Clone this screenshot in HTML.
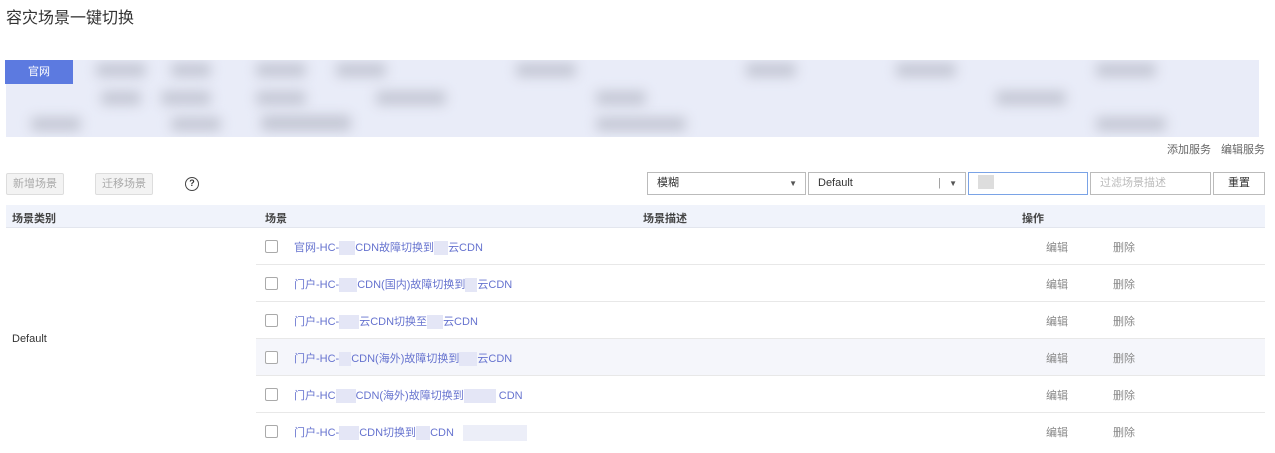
<!DOCTYPE html><html><head><meta charset="utf-8"><style>
*{margin:0;padding:0;box-sizing:border-box}
body{width:1275px;height:453px;background:#fff;font-family:"Liberation Sans","Noto Sans CJK SC",sans-serif;font-size:11px;color:#333;position:relative;overflow:hidden}
.a{position:absolute}
.band{left:6px;top:60px;width:1253px;height:77px;background:#e9ecf8;overflow:hidden}
.blob{position:absolute;background:#c4c7d4;filter:blur(6px);border-radius:4px;height:14px}
.btn{border:1px solid #ddd;background:#f3f3f3;color:#aaa;text-align:center;line-height:20px;height:22px;border-radius:2px}
.sel{border:1px solid #bbb;height:23px;line-height:21px;padding-left:9px;background:#fff}
.row{left:256px;width:1009px;height:37px;border-bottom:1px solid #e8e8e8}
.cb{position:absolute;left:9px;top:12px;width:13px;height:13px;border:1px solid #aaa;border-radius:2px;background:#fff}
.lk{position:absolute;left:38px;top:11px;color:#6673cf}
.op{position:absolute;top:11px;color:#888}
.m{display:inline-block;background:#e4e6f6;height:14px;vertical-align:middle}
</style></head><body>
<div class="a" style="left:6px;top:4px;font-size:16px;color:#333">容灾场景一键切换</div>
<div class="a band">
<div class="blob" style="left:90px;top:3px;width:50px"></div>
<div class="blob" style="left:165px;top:3px;width:40px"></div>
<div class="blob" style="left:250px;top:3px;width:50px"></div>
<div class="blob" style="left:330px;top:3px;width:50px"></div>
<div class="blob" style="left:510px;top:3px;width:60px"></div>
<div class="blob" style="left:740px;top:3px;width:50px"></div>
<div class="blob" style="left:890px;top:3px;width:60px"></div>
<div class="blob" style="left:1090px;top:3px;width:60px"></div>
<div class="blob" style="left:95px;top:31px;width:40px"></div>
<div class="blob" style="left:155px;top:31px;width:50px"></div>
<div class="blob" style="left:250px;top:31px;width:50px"></div>
<div class="blob" style="left:370px;top:31px;width:70px"></div>
<div class="blob" style="left:590px;top:31px;width:50px"></div>
<div class="blob" style="left:990px;top:31px;width:70px"></div>
<div class="blob" style="left:25px;top:57px;width:50px"></div>
<div class="blob" style="left:165px;top:57px;width:50px"></div>
<div class="blob" style="left:255px;top:55px;width:90px;height:16px"></div>
<div class="blob" style="left:590px;top:57px;width:90px"></div>
<div class="blob" style="left:1090px;top:57px;width:70px"></div>
</div>
<div class="a" style="left:5px;top:60px;width:68px;height:24px;background:#5c7ae0;color:#fff;text-align:center;line-height:24px;font-size:11px">官网</div>
<div class="a" style="left:1167px;top:141px;color:#666">添加服务</div>
<div class="a" style="left:1221px;top:141px;color:#666">编辑服务</div>
<div class="a btn" style="left:6px;top:173px;width:58px">新增场景</div>
<div class="a btn" style="left:95px;top:173px;width:58px">迁移场景</div>
<div class="a" style="left:185px;top:177px;width:14px;height:14px;border:1.5px solid #444;border-radius:50%;font-size:9px;line-height:11px;text-align:center;font-weight:bold">?</div>
<div class="a sel" style="left:647px;top:172px;width:159px">模糊<span style="position:absolute;right:8px;font-size:8px;color:#555">▼</span></div>
<div class="a sel" style="left:808px;top:172px;width:158px">Default<span style="position:absolute;right:24px;color:#999">|</span><span style="position:absolute;right:8px;font-size:8px;color:#555">▼</span></div>
<div class="a sel" style="left:968px;top:172px;width:120px;border-color:#7aa3e6"><span class="m" style="width:16px;margin-top:-2px;background:#ddd"></span></div>
<div class="a sel" style="left:1090px;top:172px;width:121px;color:#bbb">过滤场景描述</div>
<div class="a sel" style="left:1213px;top:172px;width:52px;padding:0;text-align:center;color:#333">重置</div>
<div class="a" style="left:6px;top:205px;width:1259px;height:23px;background:#f0f3fb;border-bottom:1px solid #e3e6ee"></div>
<div class="a" style="left:12px;top:210px;font-weight:bold;color:#444">场景类别</div>
<div class="a" style="left:265px;top:210px;font-weight:bold;color:#444">场景</div>
<div class="a" style="left:643px;top:210px;font-weight:bold;color:#444">场景描述</div>
<div class="a" style="left:1022px;top:210px;font-weight:bold;color:#444">操作</div>
<div class="a row" style="top:228px"><div class="cb"></div><div class="lk">官网-HC-<span class="m" style="width:16px"></span>CDN故障切换到<span class="m" style="width:14px"></span>云CDN</div><div class="op" style="left:790px">编辑</div><div class="op" style="left:857px">删除</div></div>
<div class="a row" style="top:265px"><div class="cb"></div><div class="lk">门户-HC-<span class="m" style="width:18px"></span>CDN(国内)故障切换到<span class="m" style="width:12px"></span>云CDN</div><div class="op" style="left:790px">编辑</div><div class="op" style="left:857px">删除</div></div>
<div class="a row" style="top:302px"><div class="cb"></div><div class="lk">门户-HC-<span class="m" style="width:20px"></span>云CDN切换至<span class="m" style="width:16px"></span>云CDN</div><div class="op" style="left:790px">编辑</div><div class="op" style="left:857px">删除</div></div>
<div class="a row" style="top:339px;background:#f5f6fb"><div class="cb"></div><div class="lk">门户-HC-<span class="m" style="width:12px"></span>CDN(海外)故障切换到<span class="m" style="width:18px"></span>云CDN</div><div class="op" style="left:790px">编辑</div><div class="op" style="left:857px">删除</div></div>
<div class="a row" style="top:376px"><div class="cb"></div><div class="lk">门户-HC<span class="m" style="width:20px"></span>CDN(海外)故障切换到<span class="m" style="width:32px"></span> CDN</div><div class="op" style="left:790px">编辑</div><div class="op" style="left:857px">删除</div></div>
<div class="a row" style="top:413px;border:none"><div class="cb"></div><div class="lk">门户-HC-<span class="m" style="width:20px"></span>CDN切换到<span class="m" style="width:14px"></span>CDN <span class="m" style="width:64px;margin-left:6px;height:16px;background:#eceef8"></span></div><div class="op" style="left:790px">编辑</div><div class="op" style="left:857px">删除</div></div>
<div class="a" style="left:12px;top:333px">Default</div>
</body></html>
